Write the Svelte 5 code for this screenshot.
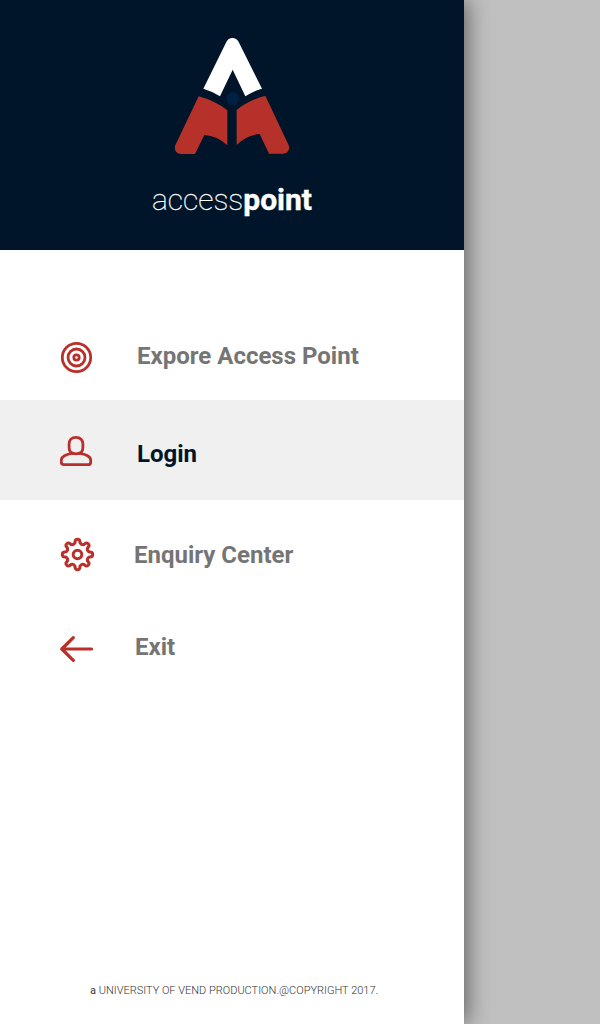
<script>
  const items = [
    { id: 'explore', label: 'Expore Access Point' },
    { id: 'login', label: 'Login' },
    { id: 'enquiry', label: 'Enquiry Center' },
    { id: 'exit', label: 'Exit' }
  ];

  // Point given along and across the axis of one tooth of the cog
  function point(tooth, along, across) {
    const a = (tooth * Math.PI) / 4;
    const x = 17.5 + along * Math.cos(a) - across * Math.sin(a);
    const y = 17.5 + along * Math.sin(a) + across * Math.cos(a);
    return `${x.toFixed(2)} ${y.toFixed(2)}`;
  }

  // Outline of the eight-toothed cog
  const cog = 'M' + point(0, 11.7, -2.5) + Array.from({ length: 8 }, (_, i) =>
    `C${point(i, 13, -2.3)} ${point(i, 15.2, -2.9)} ${point(i, 15.2, 0)}` +
    `C${point(i, 15.2, 2.9)} ${point(i, 13, 2.3)} ${point(i, 11.7, 2.5)}` +
    `Q${point(i + 0.5, 10, 0)} ${point(i + 1, 11.7, -2.5)}`
  ).join('') + 'Z';
</script>

<div class="screen">
  <aside class="drawer">
    <header>
      <svg class="logo" viewBox="0 0 405 405" aria-hidden="true">
        <path fill="#fff" d="M115 176 184 36Q190 24 202 24Q215 24 221 36L291 176Q264 184 241 199L203 119 165 199Q140 183 115 176Z" />
        <path fill="#b63129" d="M101 199Q150 212 187 241V346Q156 317 118 315L90 372H48C34 372 26 359 31 346Z" />
        <path fill="#b63129" d="M301 197Q249 212 215 240V345Q244 315 284 312L312 371H353C367 371 376 359 371 346Z" />
        <circle cx="203" cy="206" r="19" fill="#002144" />
      </svg>
      <div class="brand"><span>access</span><b>point</b></div>
    </header>
    <nav>
      {#each items as item}
        <div class="item {item.id}">
          <svg class="icon" viewBox="0 0 35 35" aria-hidden="true">
            {#if item.id === 'explore'}
              <circle cx="16.5" cy="17.5" r="14.2" />
              <circle cx="16.5" cy="17.5" r="8.5" />
              <circle cx="16.5" cy="17.5" r="2.7" />
            {:else if item.id === 'login'}
              <path d="M16 3.3C11.5 3.3 9.1 6.3 9.1 10V13.5C9.1 17.5 11.5 19.8 16 19.8S22.9 17.5 22.9 13.5V10C22.9 6.3 20.5 3.3 16 3.3Z" />
              <path d="M12.5 19.3C6 20 1.3 22.8 1.3 26.2V28.2Q1.3 30.7 4 30.7H28Q30.7 30.7 30.7 28.2V26.2C30.7 22.8 26 20 19.5 19.3" />
            {:else if item.id === 'enquiry'}
              <path d={cog} />
              <circle cx="17.5" cy="17.5" r="4.3" />
            {:else}
              <path class="arrow" d="M31.5 18H2M13.3 6.6 1.8 18 13.3 29.4" />
            {/if}
          </svg>
          <span class="label">{item.label}</span>
        </div>
      {/each}
    </nav>
    <footer><span>a</span> UNIVERSITY OF VEND PRODUCTION.@COPYRIGHT 2017.</footer>
  </aside>
</div>

<style>
  .screen {
    width: 600px;
    height: 1024px;
    background: #c0c0c0;
    overflow: hidden;
    font-family: Roboto, sans-serif;
  }
  .drawer {
    width: 464px;
    height: 1024px;
    display: flex;
    flex-direction: column;
    background: #fff;
    box-shadow: 3px 0 21px rgba(0, 0, 0, 0.5);
  }
  header {
    height: 250px;
    box-sizing: border-box;
    padding-top: 30px;
    background: #001529;
    display: flex;
    flex-direction: column;
    align-items: center;
  }
  .logo {
    width: 135px;
    height: 135px;
    display: block;
  }
  .brand {
    margin-top: 17px;
    color: #fff;
    font-size: 30px;
    line-height: 36px;
    white-space: nowrap;
  }
  .brand span {
    font-weight: 100;
    -webkit-text-stroke: 0.3px #fff;
  }
  .brand b {
    font-weight: 700;
    -webkit-text-stroke: 0.4px #fff;
  }
  nav {
    height: 450px;
    display: grid;
    grid-template-rows: 150px 100px 100px 100px;
  }
  .item {
    display: flex;
    align-items: flex-start;
    padding-left: 60px;
    color: #757575;
    font-size: 24px;
    line-height: 28px;
    font-weight: 700;
  }
  .icon {
    width: 35px;
    height: 35px;
    fill: none;
    stroke: #b9302a;
    stroke-width: 2.8;
    stroke-linecap: round;
    stroke-linejoin: round;
  }
  .arrow { stroke-width: 3.2; }
  .explore .icon { margin-top: 90px; }
  .explore .label { margin: 92px 0 0 42px; }
  .login { background: #f0f0f0; color: #001529; }
  .login .icon { margin-top: 34px; }
  .login .label { margin: 40px 0 0 42px; }
  .enquiry .icon { margin-top: 37px; stroke-width: 3; }
  .enquiry .label { margin: 41px 0 0 39px; }
  .exit .icon { margin-top: 31px; }
  .exit .label { margin: 33px 0 0 40px; }
  footer {
    margin: auto 0 26px 90px;
    color: #333;
    font-size: 11px;
    font-weight: 300;
    line-height: 14px;
    white-space: nowrap;
  }
  footer span { font-weight: 400; }
</style>
